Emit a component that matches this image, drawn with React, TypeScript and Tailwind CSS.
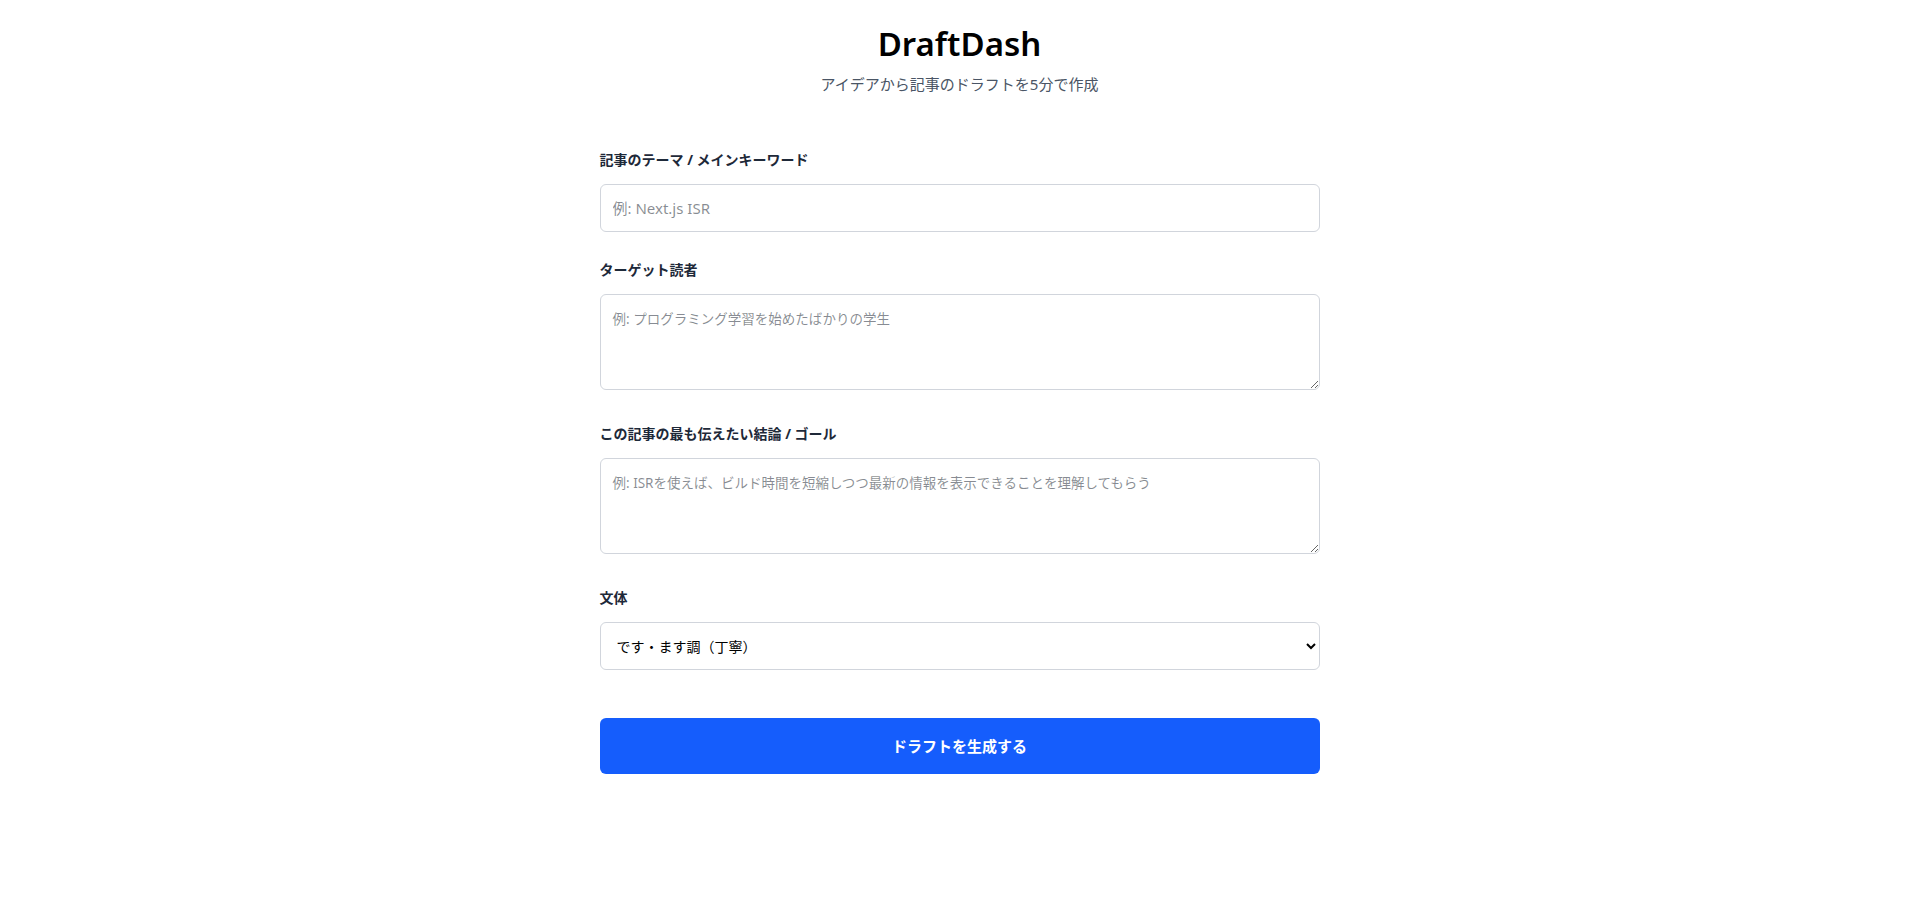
import React from "react";

export default function App() {
  return (
    <div className="min-h-screen bg-white font-['Noto_Sans','Noto_Sans_CJK_JP',sans-serif]">
      <div className="mx-auto w-[720px] pt-6">
        <header className="text-center">
          <h1 className="text-[33px] leading-10 font-semibold text-black">DraftDash</h1>
          <p className="mt-2 text-[15px] leading-6 text-gray-600">アイデアから記事のドラフトを5分で作成</p>
        </header>
        <form className="mt-[54px] flex flex-col" onSubmit={(e) => e.preventDefault()}>
          <div>
            <label className="mb-3.5 block text-sm leading-5 font-bold text-gray-800">
              記事のテーマ / メインキーワード
            </label>
            <input
              type="text"
              placeholder="例: Next.js ISR"
              className="block h-12 w-full rounded-md border border-gray-300 px-3 text-[15px] text-gray-900 outline-none"
            />
          </div>
          <div className="mt-7">
            <label className="mb-3.5 block text-sm leading-5 font-bold text-gray-800">ターゲット読者</label>
            <textarea
              placeholder="例: プログラミング学習を始めたばかりの学生"
              className="block h-24 w-full rounded-md border border-gray-300 px-3 py-3 text-[13.5px] leading-6 text-gray-900 outline-none"
            />
          </div>
          <div className="mt-[34px]">
            <label className="mb-3.5 block text-sm leading-5 font-bold text-gray-800">
              この記事の最も伝えたい結論 / ゴール
            </label>
            <textarea
              placeholder="例: ISRを使えば、ビルド時間を短縮しつつ最新の情報を表示できることを理解してもらう"
              className="block h-24 w-full rounded-md border border-gray-300 px-3 py-3 text-[13.5px] leading-6 text-gray-900 outline-none"
            />
          </div>
          <div className="mt-[34px]">
            <label className="mb-3.5 block text-sm leading-5 font-bold text-gray-800">文体</label>
            <select className="block h-12 w-full rounded-md border border-gray-300 bg-white px-3 text-sm text-black outline-none">
              <option>です・ます調（丁寧）</option>
              <option>だ・である調</option>
            </select>
          </div>
          <button
            type="submit"
            className="mt-12 h-14 w-full rounded-md bg-blue-600 text-[15px] font-bold text-white"
          >
            ドラフトを生成する
          </button>
        </form>
      </div>
    </div>
  );
}
